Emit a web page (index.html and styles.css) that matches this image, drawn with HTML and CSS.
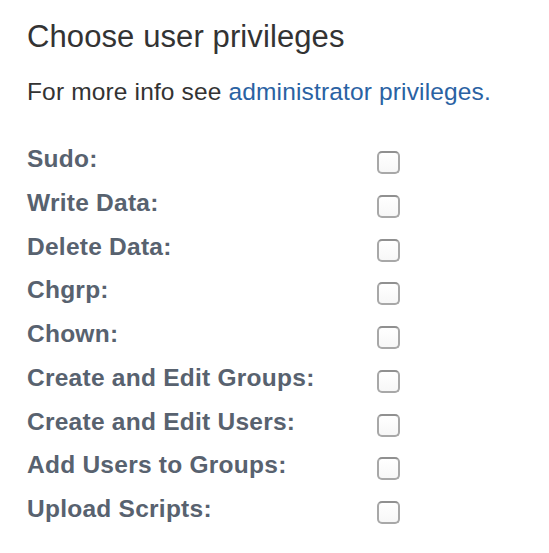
FILE: index.html
```html
<!DOCTYPE html>
<html>
<head>
<meta charset="utf-8">
<link rel="stylesheet" href="styles.css">
</head>
<body>
<div class="panel">
  <h4 class="title">Choose user privileges</h4>
  <p class="info">For more info see <a href="#" class="link">administrator privileges.</a></p>
  <div class="rows">
    <div class="row"><label class="label">Sudo:</label><span class="check"></span></div>
    <div class="row"><label class="label">Write Data:</label><span class="check"></span></div>
    <div class="row"><label class="label">Delete Data:</label><span class="check"></span></div>
    <div class="row"><label class="label">Chgrp:</label><span class="check"></span></div>
    <div class="row"><label class="label">Chown:</label><span class="check"></span></div>
    <div class="row"><label class="label">Create and Edit Groups:</label><span class="check"></span></div>
    <div class="row"><label class="label">Create and Edit Users:</label><span class="check"></span></div>
    <div class="row"><label class="label">Add Users to Groups:</label><span class="check"></span></div>
    <div class="row"><label class="label">Upload Scripts:</label><span class="check"></span></div>
  </div>
</div>
</body>
</html>
```

FILE: styles.css
```css
html, body {
  margin: 0;
  padding: 0;
  background: #ffffff;
}

body {
  font-family: "Liberation Sans", Arial, Helvetica, sans-serif;
  color: #333333;
}

.panel {
  padding: 19px 0 0 27px;
}

.title {
  margin: 0;
  font-size: 31px;
  line-height: 36px;
  font-weight: normal;
  letter-spacing: 0.1px;
  color: #333333;
}

.info {
  margin: 19px 0 0 0;
  font-size: 24.5px;
  line-height: 35px;
  letter-spacing: 0.15px;
  color: #333333;
}

.link {
  color: #2a62a3;
  text-decoration: none;
}

.rows {
  margin-top: 28px;
  display: flex;
  flex-direction: column;
}

.row {
  display: flex;
  align-items: flex-start;
  height: 43.75px;
}

.label {
  width: 350px;
  font-size: 24.5px;
  font-weight: bold;
  line-height: 43.75px;
  letter-spacing: 0.25px;
  color: #58626f;
}

.check {
  box-sizing: border-box;
  width: 23px;
  height: 23px;
  margin-top: 14px;
  border: 2px solid #a8a8a8;
  border-top-color: #909090;
  border-radius: 5px;
  background: linear-gradient(#ffffff, #f7f7f7);
}
```
